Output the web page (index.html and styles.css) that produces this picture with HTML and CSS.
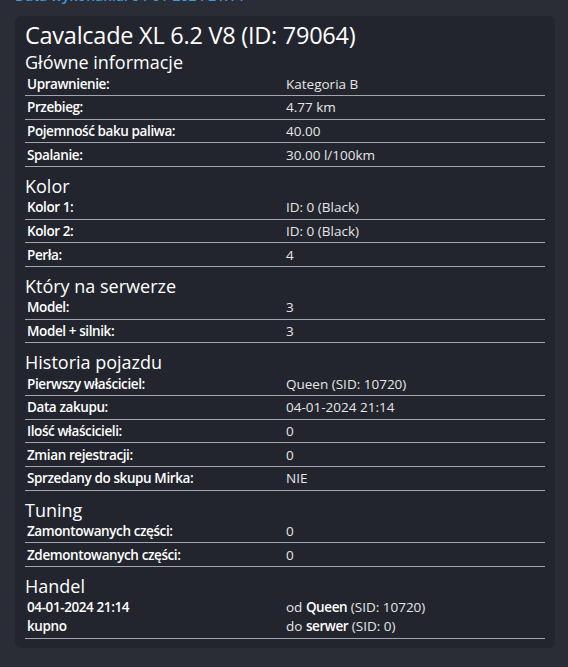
FILE: index.html
```html
<!DOCTYPE html>
<html lang="pl">
<head>
<meta charset="utf-8">
<link rel="stylesheet" href="styles.css">
</head>
<body>
<div class="page">
  <div class="stamp">Data wykonania: 04-01-2024 21:14</div>
  <div class="card">
    <h1 class="title">Cavalcade XL 6.2 V8 (ID: 79064)</h1>

    <h2 class="sec">Główne informacje</h2>
    <div class="tbl">
      <div class="row"><div class="k">Uprawnienie:</div><div class="v">Kategoria B</div></div>
      <div class="row"><div class="k">Przebieg:</div><div class="v">4.77 km</div></div>
      <div class="row"><div class="k">Pojemność baku paliwa:</div><div class="v">40.00</div></div>
      <div class="row"><div class="k">Spalanie:</div><div class="v">30.00 l/100km</div></div>
    </div>

    <h2 class="sec">Kolor</h2>
    <div class="tbl">
      <div class="row"><div class="k">Kolor 1:</div><div class="v">ID: 0 (Black)</div></div>
      <div class="row"><div class="k">Kolor 2:</div><div class="v">ID: 0 (Black)</div></div>
      <div class="row"><div class="k">Perła:</div><div class="v">4</div></div>
    </div>

    <h2 class="sec">Który na serwerze</h2>
    <div class="tbl">
      <div class="row"><div class="k">Model:</div><div class="v">3</div></div>
      <div class="row"><div class="k">Model + silnik:</div><div class="v">3</div></div>
    </div>

    <h2 class="sec">Historia pojazdu</h2>
    <div class="tbl">
      <div class="row"><div class="k">Pierwszy właściciel:</div><div class="v">Queen (SID: 10720)</div></div>
      <div class="row"><div class="k">Data zakupu:</div><div class="v">04-01-2024 21:14</div></div>
      <div class="row"><div class="k">Ilość właścicieli:</div><div class="v">0</div></div>
      <div class="row"><div class="k">Zmian rejestracji:</div><div class="v">0</div></div>
      <div class="row"><div class="k">Sprzedany do skupu Mirka:</div><div class="v">NIE</div></div>
    </div>

    <h2 class="sec">Tuning</h2>
    <div class="tbl">
      <div class="row"><div class="k">Zamontowanych części:</div><div class="v">0</div></div>
      <div class="row"><div class="k">Zdemontowanych części:</div><div class="v">0</div></div>
    </div>

    <h2 class="sec">Handel</h2>
    <div class="tbl">
      <div class="row multi">
        <div class="k">04-01-2024 21:14<br>kupno</div>
        <div class="v">od <b>Queen</b> (SID: 10720)<br>do <b>serwer</b> (SID: 0)</div>
      </div>
    </div>
  </div>
</div>
</body>
</html>
```

FILE: styles.css
```css
html, body {
  margin: 0;
  padding: 0;
}
body {
  background: #2a2d36;
  font-family: "Open Sans", "Noto Sans", sans-serif;
  color: #f2f2f2;
  height: 667px;
  overflow: hidden;
}
.page {
  padding: 0 13px 0 15px;
}
.stamp {
  margin-top: -13px;
  height: 18px;
  line-height: 18px;
  font-size: 14px;
  color: #3d9ae0;
  font-weight: 600;
}
.card {
  margin-top: 11px;
  background: #22252e;
  border-radius: 6px;
  width: 540px;
  height: 632px;
  box-sizing: border-box;
  padding: 3px 10px 0 10px;
}
.title {
  margin: 0;
  font-size: 23.5px;
  font-weight: 400;
  letter-spacing: -0.25px;
  line-height: 32px;
  color: #ffffff;
}
.sec {
  margin: 0;
  font-size: 18px;
  font-weight: 400;
  line-height: 19px;
  color: #ffffff;
  padding-top: 10px;
}
.title + .sec {
  padding-top: 2.33px;
}
.tbl {
  display: flex;
  flex-direction: column;
}
.row {
  display: grid;
  grid-template-columns: 261px 1fr;
  border-bottom: 1px solid #a3a5aa;
  height: 23.67px;
  box-sizing: border-box;
  align-items: center;
  font-size: 13.5px;
}
.k {
  padding-left: 2px;
  font-weight: 600;
  letter-spacing: -0.4px;
  color: #ffffff;
}
.v {
  color: #e6e6e6;
}
.row.multi {
  height: auto;
  padding: 2px 0 2px;
  line-height: 19px;
  align-items: start;
}
.v b {
  font-weight: 600;
  letter-spacing: -0.4px;
  color: #ffffff;
}
```
